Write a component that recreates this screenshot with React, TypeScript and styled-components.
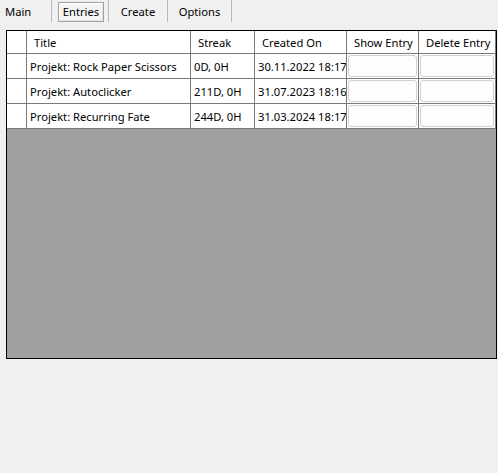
import React from "react";
import styled, { createGlobalStyle } from "styled-components";

const Global = createGlobalStyle`
  html, body { margin: 0; padding: 0; background: #f0f0f0; }
  body { font-family: "Noto Sans", "Open Sans", sans-serif; font-size: 11.2px; color: #000; }
`;

const Page = styled.div`
  width: 498px;
  height: 473px;
  background: #f0f0f0;
  display: flex;
  flex-direction: column;
`;

const TabBar = styled.div`
  display: flex;
  align-items: flex-start;
  height: 30px;
`;

const Tab = styled.div<{ $w: number; $first?: boolean }>`
  width: ${(p) => p.$w}px;
  height: 22px;
  display: flex;
  align-items: center;
  justify-content: ${(p) => (p.$first ? "flex-start" : "center")};
  box-sizing: border-box;
  border-right: 1px solid #b9b9b9;
  padding: ${(p) => (p.$first ? "0 0 0 5px" : "0 4px")};
`;

const TabLabel = styled.span<{ $selected?: boolean }>`
  display: flex;
  align-items: center;
  justify-content: center;
  height: 20px;
  margin-top: 1px;
  box-sizing: border-box;
  ${(p) =>
    p.$selected
      ? `border: 1px solid #a0a0a0; box-shadow: inset 1px 1px 0 #ffffff, inset -1px -1px 0 #e3e3e3; background: #f4f4f4; width: 47px; margin-left: 2px;`
      : ``}
`;

const TableBox = styled.div`
  margin-left: 6px;
  width: 491px;
  height: 329px;
  box-sizing: border-box;
  border: 1px solid #000;
  background: #a0a0a0;
  display: flex;
  flex-direction: column;
`;

const Row = styled.div<{ $h: number }>`
  display: grid;
  grid-template-columns: 19px 163px 63px 91px 71px 76px;
  column-gap: 1px;
  background: #7a7a7a;
  height: ${(p) => p.$h}px;
  border-bottom: 1px solid #7a7a7a;
`;

const Cell = styled.div<{ $header?: boolean }>`
  background: #fff;
  display: flex;
  align-items: center;
  padding-left: ${(p) => (p.$header ? 7 : 3)}px;
  white-space: nowrap;
  overflow: hidden;
`;

const ButtonCell = styled.div`
  background: #fff;
  padding: 1px;
  display: flex;
`;

const CellButton = styled.button`
  flex: 1;
  border: 1px solid #d0d0d0;
  border-radius: 3px;
  background: #fdfdfd;
  margin: 0;
  padding: 0;
`;

const Empty = styled.div`
  flex: 1;
  background: #a0a0a0;
`;

const entries = [
  { title: "Projekt: Rock Paper Scissors", streak: "0D, 0H", created: "30.11.2022 18:17" },
  { title: "Projekt: Autoclicker", streak: "211D, 0H", created: "31.07.2023 18:16" },
  { title: "Projekt: Recurring Fate", streak: "244D, 0H", created: "31.03.2024 18:17" },
];

export default function App() {
  return (
    <Page>
      <Global />
      <TabBar>
        <Tab $w={52} $first>
          <TabLabel>Main</TabLabel>
        </Tab>
        <Tab $w={57}>
          <TabLabel $selected>Entries</TabLabel>
        </Tab>
        <Tab $w={59}>
          <TabLabel>Create</TabLabel>
        </Tab>
        <Tab $w={64}>
          <TabLabel>Options</TabLabel>
        </Tab>
      </TabBar>
      <TableBox>
        <Row $h={22}>
          <Cell $header />
          <Cell $header>Title</Cell>
          <Cell $header>Streak</Cell>
          <Cell $header>Created On</Cell>
          <Cell $header>Show Entry</Cell>
          <Cell $header>Delete Entry</Cell>
        </Row>
        {entries.map((e) => (
          <Row $h={24} key={e.title}>
            <Cell />
            <Cell>{e.title}</Cell>
            <Cell>{e.streak}</Cell>
            <Cell>{e.created}</Cell>
            <ButtonCell>
              <CellButton />
            </ButtonCell>
            <ButtonCell>
              <CellButton />
            </ButtonCell>
          </Row>
        ))}
        <Empty />
      </TableBox>
    </Page>
  );
}
